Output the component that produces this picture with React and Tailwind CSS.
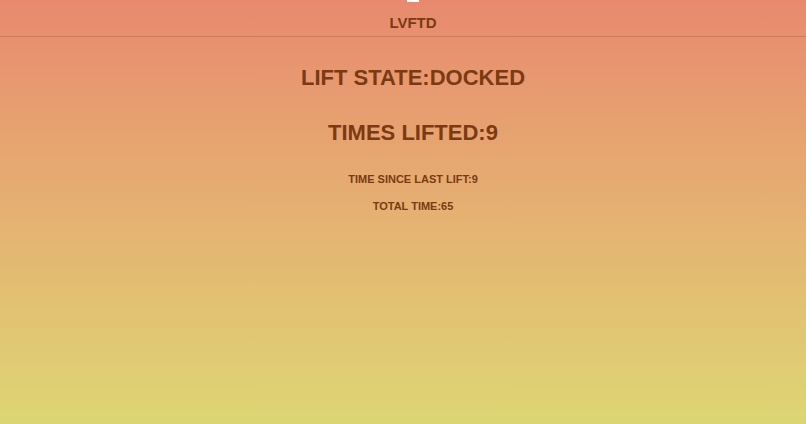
export default function App() {
  return (
    <div className="h-[424px] w-full overflow-hidden bg-gradient-to-b from-[#e8896e] to-[#ddd674] font-['Liberation_Sans',Arial,sans-serif] text-[#7b3a12]">
      <div className="relative flex h-[37px] items-end justify-center border-b border-[#cf7a5e] pb-[6px] pl-[20px]">
        <div className="absolute left-[407px] top-0 h-[2px] w-[12px] bg-white"></div>
        <span className="text-[15px] font-bold leading-none">LVFTD</span>
      </div>
      <div className="flex flex-col items-center pl-[20px]">
        <div className="mt-[30px] text-[22px] font-bold leading-none">LIFT STATE:DOCKED</div>
        <div className="mt-[33px] text-[22px] font-bold leading-none">TIMES LIFTED:9</div>
        <div className="mt-[30px] text-[11px] font-bold leading-none">TIME SINCE LAST LIFT:9</div>
        <div className="mt-[16px] text-[11px] font-bold leading-none">TOTAL TIME:65</div>
      </div>
    </div>
  );
}
